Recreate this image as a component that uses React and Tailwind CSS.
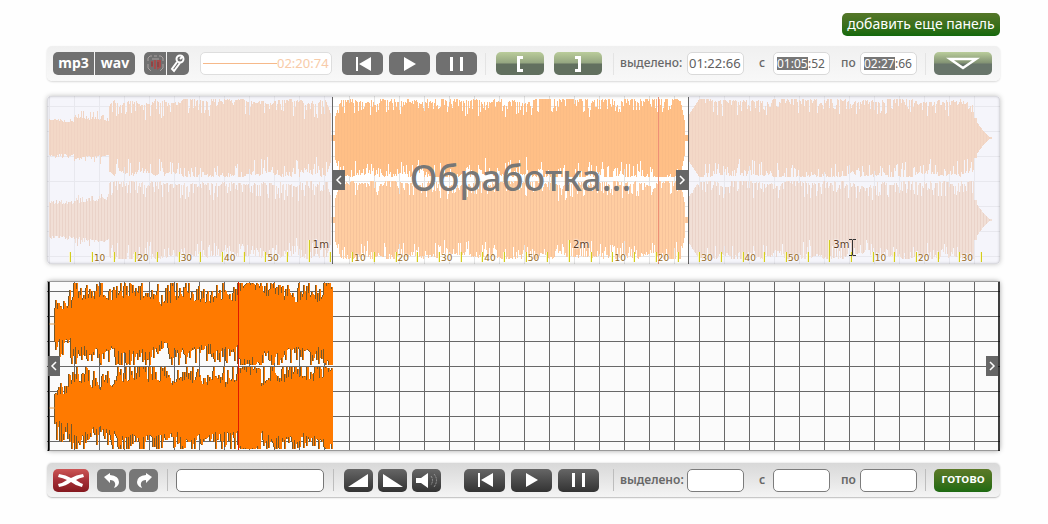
// src/App.jsx
import clsx from "clsx";

const WIDTH = 953;

// Small repeatable noise generator, so the waves don't change between renders
const createNoise = (seed) => {
  let s = seed;
  return () => {
    s = (s * 16807) % 2147483647;
    return s / 2147483647;
  };
};

// Stepped outline around a centre line, one step per pixel
const buildWave = (from, to, center, amplitude, seed) => {
  const noise = createNoise(seed);
  const top = [];
  const bottom = [];
  let drift = 0;
  for (let x = from; x < to; x++) {
    drift = drift * 0.9 + (noise() - 0.5) * 2;
    const up = Math.max(1, Math.round(amplitude(x, noise(), drift)));
    const down = Math.max(1, Math.round(amplitude(x, noise(), drift)));
    top.push(`L${x} ${center - up}L${x + 1} ${center - up}`);
    bottom.unshift(`L${x + 1} ${center + down}L${x} ${center + down}`);
  }
  return `M${from} ${center}${top.join("")}${bottom.join("")}Z`;
};

// Whole track: quiet intro, loud body, fade at the end
const trackAmplitude = (x, n, drift) => {
  if (x < 27) return 16 + n * n * 4;
  if (x < 62) return 19 + drift + n * n * n * 9;
  if (x > 929) return 17 * ((945 - x) / 16) ** 1.5;
  if (x > 926) return 20;
  let limit = 39;
  if (x > 280 && x < 288) limit = x < 284 ? 34 - (x - 280) * 3 : 3;
  if (x >= 288 && x < 294) limit = 22 + (x - 288) * 3;
  if (x > 633 && x < 642) limit = x < 638 ? 38 - (x - 633) * 5 : 3;
  if (x >= 642 && x < 652) limit = 24 + (x - 642) * 1.5;
  return Math.min(limit, 38 + drift * 1.6 - n ** 4 * 16);
};

// Copied fragment
const clipAmplitude = (x, n, drift) => {
  if (x < 25) return Math.min(34, 15 + drift + n ** 3 * 22);
  if (x > 190 && x < 214) return 41 - n ** 3 * 9;
  if (x > 276) return 41 - n ** 3 * 9;
  return Math.min(41, 25 + drift * 2.5 + n * n * 20);
};

const trackTop = buildWave(2, 945, 42, trackAmplitude, 4127);
const trackBottom = buildWave(2, 945, 124, trackAmplitude, 9311);
const clipTop = buildWave(8, 286, 43, clipAmplitude, 771);
const clipBottom = buildWave(8, 286, 127, clipAmplitude, 1553);

const gridX = Array.from({ length: 38 }, (_, i) => 2 + i * 25);
const gridY = Array.from({ length: 7 }, (_, i) => 10 + i * 25);
const ticks = Array.from({ length: 43 }, (_, i) => i + 1);

const grayButton = "bg-[#707070]";
const darkButton = "bg-linear-to-b from-[#666] to-[#333]";

const Grid = ({ color }) => (
  <g stroke={color} shapeRendering="crispEdges">
    {gridX.map((x) => <line key={x} x1={x + 0.5} x2={x + 0.5} y1="0" y2="169" />)}
    {gridY.map((y) => <line key={y} x1="0" x2={WIDTH} y1={y + 0.5} y2={y + 0.5} />)}
  </g>
);

const ToolButton = ({ label, className, children }) => (
  <button
    type="button"
    aria-label={label}
    className={clsx("flex h-[23px] shrink-0 items-center justify-center text-white", className)}
  >
    {children}
  </button>
);

const Separator = ({ soft, className }) => (
  <div className={clsx("h-[22px] w-px shrink-0", soft ? "bg-[#e4e4e4]" : "bg-[#bdbdbd]", className)} />
);

const Transport = ({ tone }) => (
  <div className="flex gap-[6px]">
    <ToolButton label="В начало" className={clsx("w-[41px] rounded-[5px]", tone)}>
      <svg width="18" height="16" viewBox="0 0 18 16" fill="currentColor">
        <path d="M2 1h2v14H2zM17 1v14L5 8z" />
      </svg>
    </ToolButton>
    <ToolButton label="Играть" className={clsx("w-[41px] rounded-[5px]", tone)}>
      <svg width="14" height="16" viewBox="0 0 14 16" fill="currentColor">
        <path d="M1 1v14l12-7z" />
      </svg>
    </ToolButton>
    <ToolButton label="Пауза" className={clsx("w-[41px] rounded-[5px]", tone)}>
      <svg width="14" height="16" viewBox="0 0 14 16" fill="currentColor">
        <path d="M0 1h3v14H0zM10 1h3v14h-3z" />
      </svg>
    </ToolButton>
  </div>
);

const TimeField = ({ id, label, labelClass, selected, value, soft }) => (
  <div className="flex items-center">
    <label
      htmlFor={id}
      className={clsx("shrink-0 pb-px text-[12px] text-[#686868]", soft ? "font-medium" : "font-semibold", labelClass)}
    >
      {label}
    </label>
    <div
      className={clsx(
        "flex h-[23px] w-[57px] items-center justify-center rounded-[5px] border bg-white",
        soft ? "border-[#d9d9d9]" : "border-[#7c7c7c]"
      )}
    >
      {selected && (
        <input
          aria-label={`${label} минуты`}
          defaultValue={selected}
          className="h-[13px] w-[31px] bg-[#777] text-[12px] leading-[13px] text-white outline-none"
        />
      )}
      <input
        id={id}
        defaultValue={value}
        className={clsx(
          "h-[19px] bg-transparent text-[#606060] outline-none",
          selected ? "w-[18px] text-[12px]" : "w-[53px] text-[13px]"
        )}
      />
    </div>
  </div>
);

const TimeRange = ({ name, total = "", from = {}, to = {}, soft }) => (
  <div className="flex">
    <TimeField id={`${name}-total`} label="выделено:" labelClass="w-[67px]" value={total} soft={soft} />
    <TimeField id={`${name}-from`} label="с" labelClass="w-[29px] pl-[15px]" value={from.value} selected={from.selected} soft={soft} />
    <TimeField id={`${name}-to`} label="по" labelClass="w-[30px] pl-[11px]" value={to.value} selected={to.selected} soft={soft} />
  </div>
);

const Handle = ({ label, direction, className }) => (
  <button
    type="button"
    aria-label={label}
    className={clsx("absolute flex h-5 w-3 items-center justify-center bg-[#666] text-white", className)}
  >
    <svg width="8" height="10" viewBox="0 0 8 10" fill="none" stroke="currentColor" strokeWidth="1.5">
      <path d={direction === "left" ? "M6 1L2 5l4 4" : "M2 1l4 4-4 4"} />
    </svg>
  </button>
);

const TopToolbar = () => (
  <div className="mt-[10px] flex h-[35px] items-center rounded-[5px] bg-linear-to-b from-[#f0f0f0] to-[#f8f8f8] pr-2 pl-[6px] shadow-[0_1px_2px_rgba(0,0,0,0.15)]">
    <div className="flex gap-px text-[14px] leading-[20px] font-bold">
      <ToolButton className={clsx("w-[41px] rounded-l-[5px] pb-[2px]", grayButton)}>mp3</ToolButton>
      <ToolButton className={clsx("w-10 rounded-r-[5px] pb-[2px]", grayButton)}>wav</ToolButton>
    </div>
    <div className="ml-[9px] flex gap-px">
      <ToolButton label="Запись" className={clsx("w-[22px] rounded-l-[5px]", grayButton)}>
        <svg width="17" height="17" viewBox="0 0 17 17" fill="none">
          <path d="M1 6V3l2-2h2M7 1h3M12 1h2l2 2v3M16 9v4l-3 3M1 9v4l3 3M5 4h7" stroke="#a8a0a0" />
          <path d="M4 6h2v6H4zM7 5h2v9H7zM10 5h4v7l-4 3z" fill="#a44c4c" />
          <path d="M5 7v4M11 7v5" stroke="#783e3e" />
        </svg>
      </ToolButton>
      <ToolButton label="Микрофон" className={clsx("w-[22px] rounded-r-[5px]", grayButton)}>
        <svg width="16" height="19" viewBox="0 0 16 19" fill="none" stroke="currentColor" strokeWidth="2">
          <circle cx="10" cy="5" r="3.5" />
          <path d="M7 8L2 15l2 2 6-8M10 5l3-3" />
        </svg>
      </ToolButton>
    </div>
    <div className="ml-[11px] flex h-[23px] w-[132px] items-center rounded-[5px] border border-[#dedede] bg-white px-[2px]">
      <div className="h-px flex-1 bg-[#f6b98a]" />
      <input
        aria-label="Позиция"
        defaultValue="02:20:74"
        className="w-[52px] bg-transparent text-[13px] text-[#f8cba8] outline-none"
      />
    </div>
    <div className="ml-[10px]">
      <Transport tone={grayButton} />
    </div>
    <Separator soft className="ml-2" />
    <div className="ml-[10px] flex gap-[10px]">
      <ToolButton label="Начало выделения" className="w-12 rounded-[5px] bg-linear-to-b from-[#bacd9b] from-0% via-[#94a580] via-48% to-[#62705f] to-52%">
        <svg width="8" height="16" viewBox="0 0 8 16" fill="none" stroke="currentColor" strokeWidth="3">
          <path d="M7 1.5H2.5v13H7" />
        </svg>
      </ToolButton>
      <ToolButton label="Конец выделения" className="w-12 rounded-[5px] bg-linear-to-b from-[#bacd9b] from-0% via-[#94a580] via-48% to-[#62705f] to-52%">
        <svg width="8" height="16" viewBox="0 0 8 16" fill="none" stroke="currentColor" strokeWidth="3">
          <path d="M1 1.5h4.5v13H1" />
        </svg>
      </ToolButton>
    </div>
    <div className="ml-auto flex items-center">
      <Separator soft className="mr-[6px]" />
      <TimeRange
        name="track"
        soft
        total="01:22:66"
        from={{ selected: "01:05", value: ":52" }}
        to={{ selected: "02:27", value: ":66" }}
      />
      <Separator soft className="ml-2" />
      <ToolButton label="Вставить ниже" className="ml-2 w-[58px] rounded-[5px] bg-linear-to-b from-[#bacd9b] from-0% via-[#829273] via-48% to-[#68756a] to-52%">
        <svg width="36" height="14" viewBox="0 0 36 14" fill="none" stroke="currentColor" strokeWidth="2.5">
          <path d="M5 2h26l-13 9z" />
        </svg>
      </ToolButton>
    </div>
  </div>
);

const TrackPanel = () => (
  <div className="relative mt-[15px] h-[168px] overflow-hidden rounded-[4px] bg-[#f5f5fb]">
    <svg className="block h-full w-full" viewBox="0 0 953 168" preserveAspectRatio="none">
      <defs>
        <clipPath id="selection">
          <rect x="286" y="0" width="355" height="168" />
        </clipPath>
        <pattern id="stripes" width="3" height="168" patternUnits="userSpaceOnUse">
          <rect width="1" height="168" fill="#c08878" opacity="0.14" />
        </pattern>
      </defs>
      <Grid color="#e8e8ee" />
      <path d={trackTop} fill="#f3d8c7" />
      <path d={trackBottom} fill="#f1dfd6" />
      <g clipPath="url(#selection)">
        <rect x="286" y="0" width="355" height="168" fill="#fff" />
        <Grid color="#e4e4e4" />
        <path d={trackTop} fill="#ffbf86" />
        <path d={trackBottom} fill="#ffcda1" />
      </g>
      <path d={trackTop} fill="url(#stripes)" opacity="0.4" />
      <path d={trackBottom} fill="url(#stripes)" />
      <g shapeRendering="crispEdges">
        <path d="M285.5 1v167M641.5 1v167" stroke="#666" />
        <path d="M611.5 1v167" stroke="#ee9076" />
      </g>
    </svg>

    {/* Time ruler */}
    {ticks.map((i) => {
      const minute = i % 12 === 0;
      const label = minute ? `${i / 12}m` : i % 2 === 0 ? (i % 12) * 5 : "";
      return (
        <div
          key={i}
          className={clsx(
            "absolute bottom-[2px] border-l border-[#d2cc20] shadow-[-1px_0_0_#fbf6c8] [text-shadow:0_0_2px_#fff,0_0_2px_#fff]",
            minute
              ? "h-[22px] pl-[3px] text-[10px] leading-[10px] text-[#5c3a24]"
              : "h-[10px] pl-px text-[9px] leading-[13px] text-[#96691c]"
          )}
          style={{ left: `${((1.5 + i * 21.69) / WIDTH) * 100}%`, fontFamily: '"DejaVu Sans", sans-serif' }}
        >
          {label}
        </div>
      );
    })}

    <Handle label="Начало выделения" direction="left" className="top-[74px] left-[30%]" />
    <Handle label="Конец выделения" direction="right" className="top-[74px] left-[66%]" />
    <div className="absolute inset-0 flex items-center justify-center pr-[6px] pb-[5px] text-[36px] leading-[40px] font-medium text-[#777] pointer-events-none">
      Обработка...
    </div>
    <svg className="absolute top-[143px] left-[84%]" width="9" height="17" viewBox="0 0 9 17" fill="none" stroke="#333">
      <path d="M1 .5h3l.5.5.5-.5h3M4.5 1v15M1 16.5h3l.5-.5.5.5h3" />
    </svg>
    <div className="absolute inset-0 rounded-[4px] shadow-[inset_0_0_3px_rgba(0,0,0,0.3)] pointer-events-none" />
  </div>
);

const ClipPanel = () => (
  <div className="relative mt-[17px] h-[170px] rounded-[4px] bg-[#fbfbfb] shadow-[0_0_5px_rgba(0,0,0,0.35)]">
    <svg className="block h-full w-full" viewBox="0 0 953 170" preserveAspectRatio="none">
      <Grid color="#686868" />
      <path d="M0 .5h953M0 169.5h953" stroke="#999" />
      <g fill="#75582a" transform="translate(-1 0)">
        <path d={clipTop} />
        <path d={clipBottom} />
      </g>
      <path d="M2 43h7M2 127h7" stroke="#d99a50" />
      <path d={clipTop} fill="#ff7a00" />
      <path d={clipBottom} fill="#ff7a00" />
      <path d="M191.5 1v168" stroke="#e01800" shapeRendering="crispEdges" />
      <path d="M1.5 1v169M952 1v169" stroke="#000" strokeWidth="1.5" />
    </svg>
    <Handle label="Начало фрагмента" direction="left" className="top-[75px] left-px" />
    <Handle label="Конец фрагмента" direction="right" className="top-[75px] right-[2px]" />
  </div>
);

const BottomToolbar = () => (
  <div className="mt-3 flex h-[35px] items-center rounded-[5px] border-b border-[#c8c8c8] bg-linear-to-b from-[#d8d8d8] to-[#f4f4f4] pr-2 pl-[6px] shadow-[0_0_2px_rgba(0,0,0,0.2)]">
    <ToolButton label="Удалить" className="w-9 rounded-[5px] bg-linear-to-b from-[#cc5555] from-0% via-[#a52f37] via-50% to-[#85181f] to-100%">
      <svg width="28" height="15" viewBox="0 0 28 15" fill="currentColor">
        <path d="M2 1q7 1 12 4 5-3 12-4l1 3q-5 1-8 3 4 3 7 4l-1 3q-6-1-11-5-5 4-12 5l-1-3q5-1 9-4-4-2-9-3z" />
      </svg>
    </ToolButton>
    <div className="ml-2 flex gap-[3px]">
      <ToolButton label="Отменить" className="w-[29px] rounded-[5px] bg-[#777]">
        <svg width="18" height="17" viewBox="0 0 18 17" fill="currentColor">
          <path d="M1 5l6-4v2q9 1 9 7 0 4-5 6 2-3 1-5-1-3-5-3v3z" />
        </svg>
      </ToolButton>
      <ToolButton label="Повторить" className="w-[29px] rounded-[5px] bg-[#777]">
        <svg width="18" height="17" viewBox="0 0 18 17" fill="currentColor">
          <path d="M17 5l-6-4v2q-9 1-9 7 0 4 5 6-2-3-1-5 1-3 5-3v3z" />
        </svg>
      </ToolButton>
    </div>
    <Separator className="mr-2 ml-[9px]" />
    <input aria-label="Позиция" className="h-[23px] w-[148px] rounded-[5px] border border-[#777] bg-white px-1 text-[13px] outline-none" />
    <Separator className="ml-[9px]" />
    <div className="ml-[10px] flex gap-[5px]">
      <ToolButton label="Нарастание" className={clsx("w-[29px] rounded-[5px]", darkButton)}>
        <svg width="21" height="15" viewBox="0 0 21 15" fill="currentColor"><path d="M20 1v13H0z" /></svg>
      </ToolButton>
      <ToolButton label="Затухание" className={clsx("w-[29px] rounded-[5px]", darkButton)}>
        <svg width="21" height="15" viewBox="0 0 21 15" fill="currentColor"><path d="M1 1v13h20z" /></svg>
      </ToolButton>
      <ToolButton label="Громкость" className={clsx("w-[29px] rounded-[5px]", darkButton)}>
        <svg width="22" height="17" viewBox="0 0 22 17" fill="currentColor">
          <path d="M0 6h5l7-5v15l-7-5H0z" />
          <path d="M15 4q3 4 0 9M18 2q5 6 0 13" fill="none" stroke="#999" strokeDasharray="2 1" />
        </svg>
      </ToolButton>
    </div>
    <div className="ml-[23px]">
      <Transport tone={darkButton} />
    </div>
    <div className="ml-auto flex items-center">
      <Separator className="mr-[6px]" />
      <TimeRange name="clip" />
      <Separator className="ml-2" />
      <ToolButton className="ml-2 w-[58px] rounded-[5px] bg-linear-to-b from-[#5c7a28] to-[#1c6a12] pb-[2px] text-[13px] font-semibold">
        готово
      </ToolButton>
    </div>
  </div>
);

const App = () => (
  <main
    className="min-h-screen bg-[#fefefe] pt-[13px] pr-12 pb-6 pl-[47px]"
    style={{ fontFamily: '"Noto Sans", "Open Sans", sans-serif' }}
  >
    <div className="flex justify-end">
      <ToolButton className="w-[158px] rounded-[5px] bg-linear-to-b from-[#557629] to-[#12690c] pb-[2px] text-[14px]">
        добавить еще панель
      </ToolButton>
    </div>
    <TopToolbar />
    <div className="rounded-[4px] shadow-[0_0_5px_rgba(0,0,0,0.25)]">
      <TrackPanel />
    </div>
    <ClipPanel />
    <BottomToolbar />
  </main>
);

export default App;
